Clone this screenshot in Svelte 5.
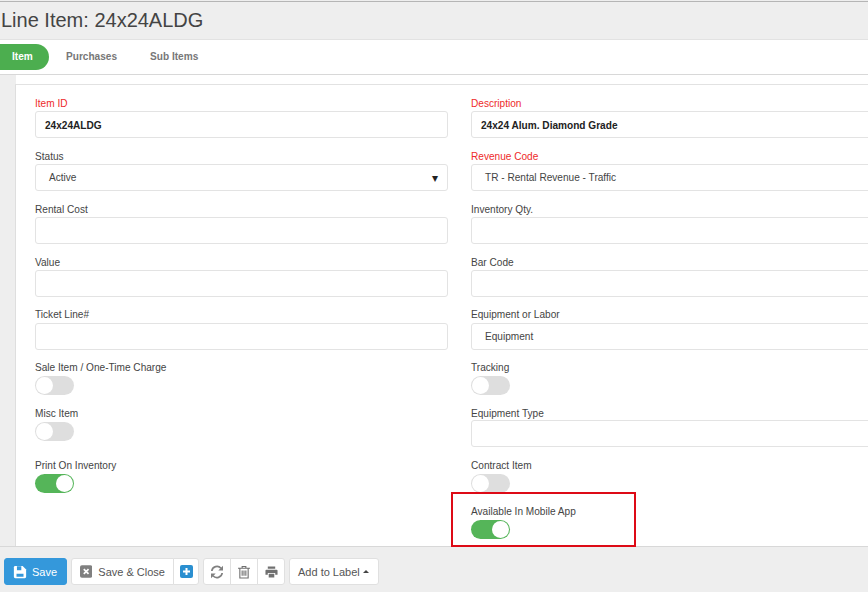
<script lang="ts">
  const rows = [
    [
      { label: 'Item ID', value: '24x24ALDG', required: true, bold: true },
      { label: 'Description', value: '24x24 Alum. Diamond Grade', required: true, bold: true },
    ],
    [
      { label: 'Status', value: 'Active', select: true },
      { label: 'Revenue Code', value: 'TR - Rental Revenue - Traffic', required: true, select: true },
    ],
    [{ label: 'Rental Cost', value: '' }, { label: 'Inventory Qty.', value: '' }],
    [{ label: 'Value', value: '' }, { label: 'Bar Code', value: '' }],
    [
      { label: 'Ticket Line#', value: '' },
      { label: 'Equipment or Labor', value: 'Equipment', select: true },
    ],
  ];
</script>

<div class="page">
  <header class="title"><h1>Line Item: 24x24ALDG</h1></header>

  <nav class="tabs">
    <span class="tab active">Item</span>
    <span class="tab">Purchases</span>
    <span class="tab">Sub Items</span>
  </nav>

  <div class="body">
    <div class="panel">
      <form class="grid">
        {#each rows as row, i}
          {#each row as f}
            <div class="field">
              <span class="label" class:low={i < 4} class:required={f.required}>{f.label}</span>
              <div class="input" class:bold={f.bold} class:select={f.select}>
                {f.value}
                {#if f.label === 'Status'}<span class="caret">▾</span>{/if}
              </div>
            </div>
          {/each}
        {/each}

        <div class="field">
          <span class="label">Sale Item / One-Time Charge</span>
          <span class="toggle"></span>
        </div>
        <div class="field">
          <span class="label">Tracking</span>
          <span class="toggle"></span>
        </div>

        <div class="field">
          <span class="label">Misc Item</span>
          <span class="toggle"></span>
        </div>
        <div class="field">
          <span class="label tight">Equipment Type</span>
          <div class="input"></div>
        </div>

        <div class="field">
          <span class="label">Print On Inventory</span>
          <span class="toggle on"></span>
        </div>
        <div class="field">
          <span class="label">Contract Item</span>
          <span class="toggle"></span>
        </div>

        <div></div>
        <div class="field highlighted">
          <span class="label">Available In Mobile App</span>
          <span class="toggle on"></span>
          <div class="redbox"></div>
        </div>
      </form>
    </div>
  </div>

  <footer class="toolbar">
    <button class="btn primary" type="button">
      <svg width="14" height="14" viewBox="0 0 16 16"><path fill="#fff" d="M1 2.500C1 1.700 1.700 1 2.500 1H11l4 4v8.500c0 .8-.7 1.500-1.500 1.500h-11C1.700 15 1 14.300 1 13.500z"/><path fill="#3498db" d="M4.500 1.500h5V6h-5zM4 10h8v3.500H4z"/></svg>
      Save
    </button>

    <div class="group">
      <button class="btn close" type="button">
        <svg width="13" height="13" viewBox="0 0 13 13"><rect width="13" height="13" rx="2" fill="#808080"/><path d="M4 4l5 5M9 4l-5 5" stroke="#fff" stroke-width="1.800"/></svg>
        Save &amp; Close
      </button>
      <button class="btn icon add" type="button" aria-label="Save and new">
        <svg width="13" height="13" viewBox="0 0 13 13"><rect width="13" height="13" rx="2" fill="#2a8fd0"/><path d="M6.500 3v7M3 6.500h7" stroke="#fff" stroke-width="2"/></svg>
      </button>
    </div>

    <div class="group">
      <button class="btn icon" type="button" aria-label="Refresh">
        <svg width="14" height="14" viewBox="0 0 14 14" fill="none" stroke="#808080" stroke-width="1.700"><path d="M1.800 6A5.300 5.300 0 0 1 11 3.200"/><path d="M12.200 8A5.300 5.300 0 0 1 3 10.800"/><path fill="#808080" stroke="none" d="M13 .8V5.500H8.300zM1 13.200V8.500h4.700z"/></svg>
      </button>
      <button class="btn icon" type="button" aria-label="Delete">
        <svg width="12" height="14" viewBox="0 0 13 14" fill="none" stroke="#707070" stroke-width="1.200"><path d="M0 3h13M4.500 3V1h4v2M2 3v10.500h9V3M4.500 5.500v5.500M6.500 5.500v5.500M8.500 5.500v5.500"/></svg>
      </button>
      <button class="btn icon" type="button" aria-label="Print">
        <svg width="13" height="14" viewBox="0 0 14 14"><path fill="#707070" d="M3 1h8v2.500H3zM1.500 4.500h11c.6 0 1 .4 1 1V10H11V8H3v2H.5V5.500c0-.6.4-1 1-1zM4 9h6v4H4z"/></svg>
      </button>
    </div>

    <button class="btn label-btn" type="button">Add to Label <span class="up"></span></button>
  </footer>
</div>

<style>
  :global(body) {
    margin: 0;
    background: #eeeeee;
    font-family: 'Liberation Sans', Arial, sans-serif;
    overflow: hidden;
  }

  .page {
    width: 868px;
    height: 592px;
    display: flex;
    flex-direction: column;
    overflow: hidden;
    color: #333;
  }

  .title {
    height: 37px;
    border-top: 1px solid #b5b5b5;
    margin-top: 1px;
    flex-shrink: 0;
  }

  h1 {
    margin: 0;
    padding-left: 1px;
    font-size: 20px;
    font-weight: 400;
    line-height: 37px;
    color: #444;
  }

  .tabs {
    height: 34px;
    flex-shrink: 0;
    background: #fff;
    border-top: 1px solid #e2e2e2;
    border-bottom: 1px solid #d8d8d8;
    display: flex;
    align-items: center;
  }

  .tab {
    font-size: 10.100px;
    font-weight: 700;
    color: #777;
    padding: 0 16.500px;
    line-height: 26px;
  }

  .active {
    width: 49px;
    box-sizing: border-box;
    padding: 0 0 0 12px;
    margin-right: 0.500px;
    background: #4cae4f;
    color: #fff;
    border-radius: 0 13px 13px 0;
  }

  .body {
    flex: 1;
    min-height: 0;
    padding-left: 16px;
    border-bottom: 1px solid #d8d8d8;
    display: flex;
    background: linear-gradient(#fff, #fff) 16px 0 / 100% 10px no-repeat, #eeeeee;
  }

  .panel {
    flex: 1;
    min-width: 0;
    margin-top: 9px;
    background: #fff;
    border-top: 1px solid #e2e2e2;
    border-left: 1px solid #dedede;
    margin-left: -1px;
  }

  .grid {
    display: grid;
    grid-template-columns: 413px 500px;
    column-gap: 23px;
    grid-template-rows: repeat(5, 53px) 46px 52px 46px 36px;
    padding: 11px 0 0 19px;
  }

  .field {
    display: flex;
    flex-direction: column;
    align-items: flex-start;
    position: relative;
  }

  .label {
    font-size: 10.100px;
    line-height: 14px;
    color: #444;
    margin-bottom: 1px;
  }

  .label.low {
    padding-top: 1px;
    margin-bottom: 0;
  }

  .label.tight {
    margin-bottom: -1px;
  }

  .required {
    color: #ee2a2a;
  }

  .input {
    box-sizing: border-box;
    width: 100%;
    height: 27px;
    padding: 0 9px;
    display: flex;
    align-items: center;
    justify-content: space-between;
    border: 1px solid #e3e3e3;
    border-radius: 3px;
    background: #fff;
    font-size: 10.100px;
    color: #444;
  }

  .bold {
    padding-top: 2px;
    font-weight: 700;
    color: #222;
  }

  .select {
    padding-left: 13px;
  }

  .caret {
    font-size: 12px;
    color: #222;
  }

  .toggle {
    display: block;
    position: relative;
    width: 39px;
    height: 19px;
    box-sizing: border-box;
    border-radius: 10px;
    background: #dedede;
    flex-shrink: 0;
  }

  .toggle::after {
    content: '';
    position: absolute;
    top: 1px;
    left: 1px;
    width: 17px;
    height: 17px;
    border-radius: 50%;
    background: #fff;
  }

  .toggle.on {
    background: #55b559;
  }

  .toggle.on::after {
    left: 21px;
  }

  .redbox {
    position: absolute;
    left: -20px;
    top: -13px;
    width: 185px;
    height: 55px;
    box-sizing: border-box;
    border: 2px solid #dd0a16;
  }

  .toolbar {
    height: 45px;
    flex-shrink: 0;
    box-sizing: border-box;
    padding: 11px 0 0 4px;
    display: flex;
    align-items: flex-start;
    gap: 4px;
  }

  .group {
    display: flex;
  }

  .btn {
    height: 27px;
    box-sizing: border-box;
    margin: 0;
    padding: 0 8px;
    display: flex;
    align-items: center;
    gap: 6px;
    border: 1px solid #e0e0e0;
    border-radius: 3px;
    background: #fff;
    font: 400 11px 'Liberation Sans', Arial, sans-serif;
    color: #555;
    white-space: nowrap;
  }

  .primary {
    width: 63px;
    gap: 5px;
    background: #3498db;
    border-color: #3498db;
    color: #fff;
  }

  .group .btn {
    border-radius: 0;
    margin-left: -1px;
  }

  .group .btn:first-child {
    border-radius: 3px 0 0 3px;
    margin-left: 0;
  }

  .group .btn:last-child {
    border-radius: 0 3px 3px 0;
  }

  .close {
    width: 103px;
  }

  .icon {
    width: 28px;
    padding: 0;
    justify-content: center;
  }

  .group .add {
    width: 26px;
  }

  .label-btn {
    width: 90px;
    gap: 3px;
  }

  .up {
    width: 0;
    height: 0;
    border-left: 3px solid transparent;
    border-right: 3px solid transparent;
    border-bottom: 3px solid #444;
  }
</style>
